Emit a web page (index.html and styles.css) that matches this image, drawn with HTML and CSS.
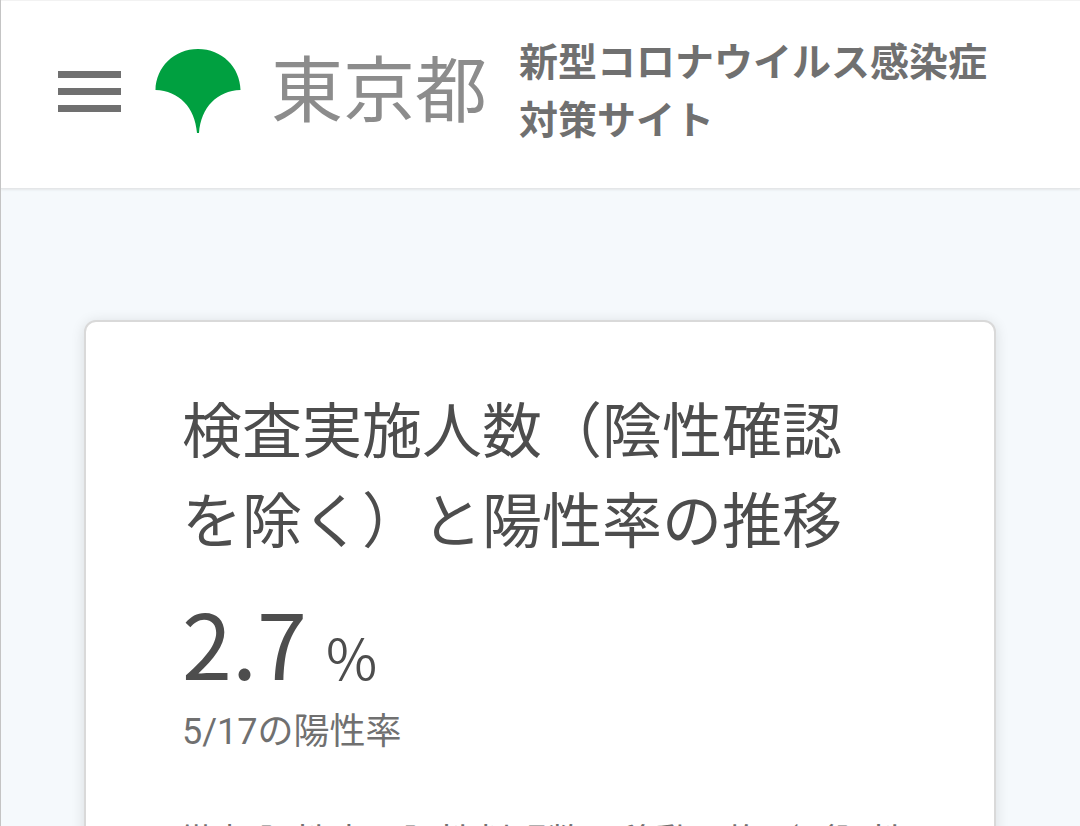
FILE: index.html
```html
<!DOCTYPE html>
<html lang="ja">
<head>
<meta charset="utf-8">
<meta name="viewport" content="width=device-width, initial-scale=1">
<title>新型コロナウイルス感染症対策サイト</title>
<link rel="stylesheet" href="styles.css">
</head>
<body class="page">
<header class="header">
  <button class="menu" type="button" aria-label="メニュー"><span class="bar"></span><span class="bar"></span><span class="bar"></span></button>
  <a class="brand" href="#">
    <svg class="logo" viewBox="0 0 86 84" aria-hidden="true"><path fill="#00a040" d="M0.500 41C1 18 19 0 43 0S85 18 85.500 41C62 42 46 58 44 84H42C40 58 24 42 0.500 41Z"/></svg>
    <span class="tokyo">東京都</span>
  </a>
  <h1 class="title">新型コロナウイルス感染症<br>対策サイト</h1>
</header>
<main class="main">
  <section class="card">
    <h2 class="heading">検査実施人数（陰性確認を除く）と陽性率の推移</h2>
    <p class="figure">2.7<span class="unit">%</span></p>
    <p class="date">5/17の陽性率</p>
    <p class="note">備考 陽性率：陽性判明数の移動平均／（陽性判明数＋陰性確認数）の移動平均</p>
  </section>
</main>
</body>
</html>
```
FILE: styles.css
```css
* { box-sizing: border-box; }
.page {
  margin: 0;
  height: 100vh;
  overflow: hidden;
  background: #f5f9fc;
  border-left: 1px solid #c4c4c4;
  color: #4d4d4d;
  font-family: Roboto, "Noto Sans CJK JP", sans-serif;
}
.header {
  display: flex;
  align-items: center;
  padding: 29px 57px 36px;
  background: #fff;
  border-top: 1px solid #f2f2f2;
  border-bottom: 1px solid #e4e6e8;
  box-shadow: 0 1px 2px #e4e6e8;
}
.menu {
  display: flex;
  flex-direction: column;
  gap: 10px;
  width: 63px;
  padding: 0;
  border: 0;
  background: none;
}
.bar { width: 100%; height: 7px; background: #707070; }
.brand {
  display: flex;
  align-items: center;
  gap: 30px;
  margin: 0 32px 0 34px;
  color: #8c8c8c;
  text-decoration: none;
}
.logo { width: 86px; height: 84px; flex: none; }
.tokyo {
  padding-bottom: 12px;
  font: 400 72px/84px "Noto Sans CJK JP", sans-serif;
  white-space: nowrap;
}
.title {
  margin: 0;
  padding-bottom: 6px;
  color: #707070;
  font: 700 39px/58px "Noto Sans CJK JP", sans-serif;
  white-space: nowrap;
}
.main { padding: 131px 84px 0 83px; }
.card {
  padding: 60px 96px;
  background: #fff;
  border: 2px solid #d9d9d9;
  border-radius: 12px;
  box-shadow: 0 2px 14px rgba(0, 0, 0, 0.12);
}
.heading {
  margin: 0;
  font: 400 60px/90px "Noto Sans CJK JP", sans-serif;
}
.figure {
  margin: 12px 0 0;
  font: 400 90px/134px "Noto Sans CJK JP", sans-serif;
}
.unit { margin-left: 19px; font-size: 56px; font-weight: 350; }
.date, .note { margin: 0; color: #707070; font-size: 36px; line-height: 54px; }
.date { margin-top: -18px; }
.note { margin: 57px -12px 0 -4px; }
```
